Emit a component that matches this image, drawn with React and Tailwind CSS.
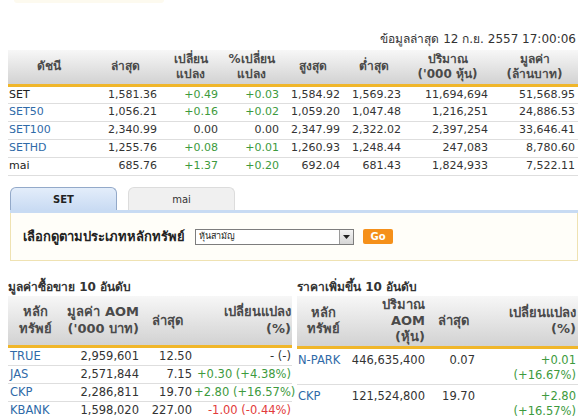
const indexRows = [
    { name: "SET", link: false, last: "1,581.36", chg: "+0.49", pct: "+0.03", high: "1,584.92", low: "1,569.23", vol: "11,694,694", val: "51,568.95" },
    { name: "SET50", link: true, last: "1,056.21", chg: "+0.16", pct: "+0.02", high: "1,059.20", low: "1,047.48", vol: "1,216,251", val: "24,886.53" },
    { name: "SET100", link: true, last: "2,340.99", chg: "0.00", pct: "0.00", high: "2,347.99", low: "2,322.02", vol: "2,397,254", val: "33,646.41" },
    { name: "SETHD", link: true, last: "1,255.76", chg: "+0.08", pct: "+0.01", high: "1,260.93", low: "1,248.44", vol: "247,083", val: "8,780.60" },
    { name: "mai", link: false, last: "685.76", chg: "+1.37", pct: "+0.20", high: "692.04", low: "681.43", vol: "1,824,933", val: "7,522.11" },
];

const topValue = [
    { sym: "TRUE", aom: "2,959,601", last: "12.50", chg: "- (-)" },
    { sym: "JAS", aom: "2,571,844", last: "7.15", chg: "+0.30 (+4.38%)" },
    { sym: "CKP", aom: "2,286,811", last: "19.70", chg: "+2.80 (+16.57%)" },
    { sym: "KBANK", aom: "1,598,020", last: "227.00", chg: "-1.00 (-0.44%)" },
];

const topGain = [
    { sym: "N-PARK", aom: "446,635,400", last: "0.07", chg: "+0.01", pct: "(+16.67%)" },
    { sym: "CKP", aom: "121,524,800", last: "19.70", chg: "+2.80", pct: "(+16.57%)" },
];

const toneClass = (v) =>
    v.startsWith("+") ? "text-[#3d9a3d]" : v.startsWith("-") && v !== "- (-)" ? "text-[#e23b3b]" : "text-[#333]";

const th = "bg-gradient-to-b from-[#f7f7f7] to-[#d2d2d2] border-b-[3px] border-[#f0b62a] font-bold text-[#4a4a4a]";

const App = () => {
    return (
        <div className="w-[583px] h-[420px] overflow-hidden bg-white text-[11px] text-[#333] font-['Tahoma','DejaVu_Sans',sans-serif]">
            {/* faded logo strip */}
            <div className="ml-[14px] h-[3px] w-[150px] rounded-b-full bg-[#fdfaef]" />

            <p className="mt-[29px] h-[15px] pr-[7px] text-right text-[12px] leading-[15px] text-[#333]">
                ข้อมูลล่าสุด 12 ก.ย. 2557 17:00:06
            </p>

            {/* index table */}
            <table className="mt-[3px] ml-[8px] w-[570px] table-fixed border-collapse">
                <colgroup>
                    <col className="w-[82px]" />
                    <col className="w-[70px]" />
                    <col className="w-[61px]" />
                    <col className="w-[61px]" />
                    <col className="w-[61px]" />
                    <col className="w-[61px]" />
                    <col className="w-[87px]" />
                    <col className="w-[87px]" />
                </colgroup>
                <thead>
                    <tr className="h-[35px] text-[12px] leading-[15px]">
                        <th className={th}>ดัชนี</th>
                        <th className={th}>ล่าสุด</th>
                        <th className={th}>เปลี่ยน<br />แปลง</th>
                        <th className={th}>%เปลี่ยน<br />แปลง</th>
                        <th className={th}>สูงสุด</th>
                        <th className={th}>ต่ำสุด</th>
                        <th className={th}>ปริมาณ<br />('000 หุ้น)</th>
                        <th className={th}>มูลค่า<br />(ล้านบาท)</th>
                    </tr>
                </thead>
                <tbody>
                    {indexRows.map((r) => (
                        <tr key={r.name} className="h-[18px] border-b border-[#dedede]">
                            <td className={`pl-[1px] ${r.link ? "text-[#2f6aa8]" : "text-[#222]"}`}>{r.name}</td>
                            <td className="pr-[3px] text-right">{r.last}</td>
                            <td className={`pr-[3px] text-right ${toneClass(r.chg)}`}>{r.chg}</td>
                            <td className={`pr-[3px] text-right ${toneClass(r.pct)}`}>{r.pct}</td>
                            <td className="pr-[3px] text-right">{r.high}</td>
                            <td className="pr-[3px] text-right">{r.low}</td>
                            <td className="pr-[3px] text-right">{r.vol}</td>
                            <td className="pr-[3px] text-right">{r.val}</td>
                        </tr>
                    ))}
                </tbody>
            </table>

            {/* tabs */}
            <div className="mt-[11px] ml-[10px] w-[568px]">
                <div className="flex gap-[11px] items-end">
                    <div className="flex h-[23px] w-[107px] items-center justify-center rounded-t-[6px] border border-b-0 border-[#93a9c9] bg-gradient-to-b from-[#e3edfa] to-[#c9dbf3] text-[10px] font-bold text-[#222]">
                        SET
                    </div>
                    <div className="flex h-[23px] w-[107px] items-center justify-center rounded-t-[6px] border border-b-0 border-[#dcdcdc] bg-[#f0f0f0] text-[10px] text-[#333]">
                        mai
                    </div>
                </div>
                <div className="h-[3px] bg-[#c8dbf3]" />
                <div className="flex h-[48px] items-center border border-t-0 border-[#efe2b2] bg-[#fffef9] pl-[12px]">
                    <span className="text-[13px] font-bold text-[#222]">เลือกดูตามประเภทหลักทรัพย์</span>
                    <div className="ml-[10px] flex h-[16px] w-[159px] items-center justify-between border border-[#7d7d7d] bg-white">
                        <span className="pl-[3px] text-[9px] leading-none text-[#222]">หุ้นสามัญ</span>
                        <span className="flex h-[14px] w-[14px] items-center justify-center border-l border-[#9a9a9a] bg-gradient-to-b from-[#f4f4f4] to-[#d6d6d6]">
                            <svg width="7" height="4" viewBox="0 0 7 4"><path d="M0 0h7L3.5 4z" fill="#222" /></svg>
                        </span>
                    </div>
                    <button className="ml-[9px] h-[15px] w-[30px] rounded-[2px] bg-[#f5901a] text-[10px] font-bold leading-none text-white">
                        Go
                    </button>
                </div>
            </div>

            {/* top 10 tables */}
            <div className="mt-[19px] ml-[8px] flex gap-[5px]">
                <div className="w-[284px]">
                    <h3 className="h-[14px] text-[12px] font-bold leading-[14px] text-[#333]">มูลค่าซื้อขาย 10 อันดับ</h3>
                    <table className="mt-[2px] w-[284px] table-fixed border-collapse">
                        <colgroup>
                            <col className="w-[54px]" />
                            <col className="w-[79px]" />
                            <col className="w-[53px]" />
                            <col className="w-[98px]" />
                        </colgroup>
                        <thead>
                            <tr className="h-[50px] text-[13px] leading-[17px]">
                                <th className={th}>หลัก<br />ทรัพย์</th>
                                <th className={`${th} pr-[2px] text-right`}>มูลค่า AOM<br />('000 บาท)</th>
                                <th className={th}>ล่าสุด</th>
                                <th className={`${th} pr-[1px] text-right`}>เปลี่ยนแปลง<br />(%)</th>
                            </tr>
                        </thead>
                        <tbody>
                            {topValue.map((r) => (
                                <tr key={r.sym} className="h-[18px] border-b border-[#dedede] text-[11.5px]">
                                    <td className="pl-[2px] text-[#2f6aa8]">{r.sym}</td>
                                    <td className="pr-[2px] text-right">{r.aom}</td>
                                    <td className="pr-[2px] text-right">{r.last}</td>
                                    <td className={`pr-[1px] text-right whitespace-nowrap ${toneClass(r.chg)}`}>{r.chg}</td>
                                </tr>
                            ))}
                        </tbody>
                    </table>
                </div>

                <div className="w-[281px]">
                    <h3 className="h-[14px] text-[12px] font-bold leading-[14px] text-[#333]">ราคาเพิ่มขึ้น 10 อันดับ</h3>
                    <table className="mt-[2px] w-[281px] table-fixed border-collapse">
                        <colgroup>
                            <col className="w-[53px]" />
                            <col className="w-[78px]" />
                            <col className="w-[50px]" />
                            <col className="w-[100px]" />
                        </colgroup>
                        <thead>
                            <tr className="h-[51px] text-[13px] leading-[16px]">
                                <th className={th}>หลัก<br />ทรัพย์</th>
                                <th className={`${th} pr-[3px] text-right`}>ปริมาณ<br />AOM<br />(หุ้น)</th>
                                <th className={th}>ล่าสุด</th>
                                <th className={`${th} pr-[2px] text-right`}>เปลี่ยนแปลง<br />(%)</th>
                            </tr>
                        </thead>
                        <tbody>
                            {topGain.map((r) => (
                                <tr key={r.sym} className="border-b border-[#dedede] text-[11.5px] leading-[15px]">
                                    <td className="pl-[1px] pt-[4px] align-top text-[#2f6aa8]">{r.sym}</td>
                                    <td className="pr-[3px] pt-[4px] align-top text-right">{r.aom}</td>
                                    <td className="pr-[3px] pt-[4px] align-top text-right">{r.last}</td>
                                    <td className="pr-[2px] pt-[4px] pb-[1px] text-right text-[#3d9a3d]">
                                        {r.chg}<br />{r.pct}
                                    </td>
                                </tr>
                            ))}
                        </tbody>
                    </table>
                </div>
            </div>
        </div>
    );
};

export default App;
